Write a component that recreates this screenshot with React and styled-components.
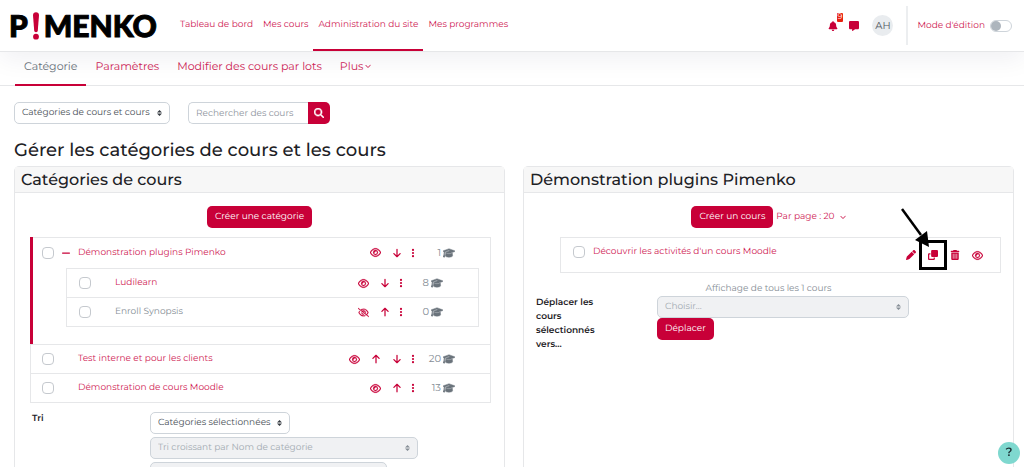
import React, { useState } from "react";
import styled, { createGlobalStyle, css, ThemeProvider } from "styled-components";
import {
  FaArrowDown,
  FaArrowUp,
  FaBell,
  FaChevronDown,
  FaClone,
  FaEllipsisVertical,
  FaGraduationCap,
  FaMagnifyingGlass,
  FaMessage,
  FaMinus,
  FaPen,
  FaRegEye,
  FaRegEyeSlash,
  FaTrashCan,
} from "react-icons/fa6";

const theme = {
  brand: "#c80038",
  link: "#cf2355",
  textColor: "#1d2125",
  muted: "#868e96",
  border: "#e6e7e9",
  inputBorder: "#ced4da",
  disabled: "#f0f1f3",
};

const GlobalStyle = createGlobalStyle`
  * {
    box-sizing: border-box;
  }
  body {
    margin: 0;
    background: #fff;
    color: ${theme.textColor};
    font-family: Montserrat, Inter, sans-serif;
    font-size: 9px;
    line-height: 14px;
    text-rendering: geometricPrecision;
  }
  button, input, select {
    font: inherit;
    margin: 0;
    text-rendering: inherit;
  }
  a {
    color: ${theme.link};
    text-decoration: none;
  }
  svg {
    display: block;
    flex: none;
  }
`;

const Page = styled.div`
  height: 100vh;
  overflow: hidden;
`;

/* top bar */
const Navbar = styled.header`
  position: relative;
  display: flex;
  align-items: stretch;
  height: 52px;
  padding: 0 12px 0 9px;
  background: #fff;
  border-bottom: 1px solid ${(props) => props.theme.border};
  box-shadow: 0 8px 24px rgba(20, 20, 60, 0.06);
`;

const Logo = styled.a`
  display: flex;
  align-items: center;
  gap: 4px;
  width: 166px;
  color: #000;
  font-family: Lato, sans-serif;
  font-weight: 900;
  font-size: 30px;
  line-height: 30px;
  -webkit-text-stroke: 1px #000;
`;

const PrimaryNav = styled.nav`
  display: flex;
  flex: 1;
`;

const PrimaryLink = styled.a`
  display: flex;
  align-items: center;
  padding: 0 5px;
  border-bottom: 2px solid ${(props) => (props.$active ? props.theme.brand : "transparent")};
`;

const UserMenu = styled.div`
  display: flex;
  align-items: center;
`;

const IconButton = styled.button`
  position: relative;
  display: grid;
  place-items: center;
  width: ${(props) => props.$width || 21}px;
  height: 14px;
  padding: 0;
  border: 0;
  background: none;
  color: ${(props) => props.theme.brand};
  font-size: ${(props) => props.$size || 10}px;
`;

const Badge = styled.span`
  position: absolute;
  top: -6px;
  right: 0;
  padding: 0 1px;
  border-radius: 1px;
  background: #e7210f;
  color: #fff;
  font-size: 8px;
  line-height: 9px;
`;

const Avatar = styled.span`
  display: grid;
  place-items: center;
  width: 21px;
  height: 21px;
  margin: 0 13px 0 8px;
  border-radius: 50%;
  background: #e9ecef;
  color: #50575e;
  font-size: 10px;
`;

const EditMode = styled.label`
  display: flex;
  align-items: center;
  gap: 5px;
  height: 39px;
  padding-left: 9px;
  border-left: 2px solid #eceef0;
  color: ${(props) => props.theme.link};
`;

const Toggle = styled.input`
  appearance: none;
  display: flex;
  align-items: center;
  width: 22px;
  height: 12px;
  padding: 0;
  border: 1px solid ${(props) => props.theme.inputBorder};
  border-radius: 6px;

  &::before {
    content: "";
    width: 10px;
    height: 10px;
    border-radius: 50%;
    background: #adb5bd;
  }
  &:checked::before {
    margin-left: auto;
  }
`;

/* second level */
const SecondaryNav = styled.nav`
  display: flex;
  height: 34px;
  padding: 0 15px;
  border-bottom: 1px solid ${(props) => props.theme.border};
`;

const SecondaryLink = styled.a`
  display: flex;
  align-items: center;
  gap: 2px;
  height: 34px;
  padding: 0 9px 4px;
  border-bottom: 2px solid ${(props) => (props.$active ? props.theme.brand : "transparent")};
  color: ${(props) => (props.$active ? "#6a737b" : props.theme.link)};
  font-size: 11px;
`;

const Content = styled.main`
  padding: 16px 10px 0 14px;
`;

const Filters = styled.div`
  display: flex;
  gap: 18px;
`;

const control = css`
  height: 22px;
  border: 1px solid ${(props) => props.theme.inputBorder};
  border-radius: 5px;
  background: #fff;
  color: #495057;
`;

const SelectWrapper = styled.span`
  position: relative;
  display: block;
  width: ${(props) => props.$width}px;
  max-width: 100%;
`;

const StyledSelect = styled.select`
  ${control}
  appearance: none;
  display: block;
  width: 100%;
  padding: 0 14px 0 7px;

  &:disabled {
    background: ${(props) => props.theme.disabled};
    color: #a3abb2;
    opacity: 1;
  }
`;

const SelectArrows = styled.svg`
  position: absolute;
  top: 8px;
  right: 8px;
  width: 5px;
  height: 6px;
  fill: ${(props) => (props.$disabled ? "#868e96" : "#343a40")};
  pointer-events: none;
`;

const SearchForm = styled.form`
  display: flex;
`;

const SearchInput = styled.input`
  ${control}
  width: 120px;
  padding: 0 7px;
  border-radius: 5px 0 0 5px;
  border-right: 0;

  &::placeholder {
    color: #8f959e;
    opacity: 1;
  }
`;

const Button = styled.button`
  display: inline-flex;
  align-items: center;
  justify-content: center;
  height: 22px;
  padding: 0 8px;
  border: 0;
  border-radius: 5px;
  background: ${(props) => props.theme.brand};
  color: #fff;
`;

const SearchButton = styled(Button)`
  width: 22px;
  padding: 0;
  border-radius: 0 5px 5px 0;
  font-size: 10px;
`;

const PageHead = styled.h2`
  margin: 14px 0 4px;
  font-size: 18px;
  line-height: 24px;
  font-weight: 500;
`;

const Columns = styled.div`
  display: grid;
  grid-template-columns: 1fr 1fr;
  gap: 18px;
`;

const Card = styled.section`
  min-height: 340px;
  border: 1px solid ${(props) => props.theme.border};
  border-radius: 5px;
`;

const CardHead = styled.h3`
  margin: 0;
  padding: 2px 6px 0;
  height: 26px;
  border-bottom: 1px solid ${(props) => props.theme.border};
  background: #f7f7f7;
  font-size: 16px;
  line-height: 24px;
  font-weight: 500;
`;

const CardActions = styled.div`
  display: flex;
  align-items: center;
  justify-content: center;
  gap: 3px;
  padding: 13px 0 9px;
`;

const PerPage = styled.a`
  display: flex;
  align-items: center;
  gap: 5px;
`;

const List = styled.ul`
  list-style: none;
  margin: ${(props) => props.$margin};
  padding: 0;
  border: 1px solid ${(props) => props.theme.border};
`;

const ListItem = styled.li`
  & + & {
    border-top: 1px solid ${(props) => props.theme.border};
  }
  ${(props) =>
    props.$open &&
    css`
      margin: -1px 0 0 -1px;
      padding-bottom: 17px;
      border-left: 3px solid ${props.theme.brand};
    `}
`;

const Row = styled.div`
  display: flex;
  align-items: center;
  height: ${(props) => props.$height || 28}px;
  padding: 0 35px 0 ${(props) => props.$left || 12}px;
`;

const Check = styled.input`
  appearance: none;
  flex: none;
  width: 12px;
  height: 12px;
  border: 1px solid #c5c9ce;
  border-radius: 4px;

  &:checked {
    background: ${(props) => props.theme.brand};
  }
`;

const Expander = styled.span`
  display: grid;
  place-items: center;
  width: 24px;
  color: ${(props) => props.theme.brand};
  font-size: 10px;
`;

const RowName = styled.a`
  flex: 1;
  white-space: nowrap;
  color: ${(props) => (props.$dimmed ? props.theme.muted : props.theme.link)};
`;

const Count = styled.span`
  display: flex;
  align-items: center;
  justify-content: flex-end;
  gap: 2px;
  width: 36px;
  color: ${(props) => props.theme.muted};
  font-size: 10px;

  svg {
    color: #6a737b;
    font-size: 12px;
  }
`;

const CourseRow = styled(Row)`
  height: 34px;
  padding: 0 12px;
`;

const CourseName = styled(RowName)`
  padding: 0 0 6px 8px;
`;

const CourseCheck = styled(Check)`
  margin-bottom: 6px;
`;

const Highlight = styled.span`
  position: relative;
  display: grid;
  place-items: center;
  width: 22px;

  &::before {
    content: "";
    position: absolute;
    inset: -8px -3px;
    border: 3px solid #000;
  }
`;

const Pointer = styled.svg`
  position: absolute;
  right: 15px;
  bottom: 15px;
  width: 32px;
  height: 44px;
  pointer-events: none;
`;

const FormRow = styled.div`
  display: grid;
  grid-template-columns: ${(props) => props.$label}px 1fr;
  margin: ${(props) => props.$margin};
`;

const FormLabel = styled.label`
  max-width: 70px;
  font-weight: 600;
`;

const Fields = styled.div`
  display: flex;
  flex-direction: column;
  align-items: flex-start;
  gap: ${(props) => props.$gap || 0}px;
`;

const Summary = styled.p`
  margin: 9px 0 0;
  text-align: center;
  color: ${(props) => props.theme.muted};
`;

const Help = styled.button`
  position: fixed;
  right: 4px;
  bottom: 3px;
  width: 22px;
  height: 22px;
  padding: 0;
  border: 0;
  border-radius: 50%;
  background: #7fd8cf;
  color: #1d2f33;
  font-size: 12px;
  font-weight: 600;
`;

const Select = ({ id, label, width, options, disabled }) => (
  <SelectWrapper $width={width}>
    <StyledSelect id={id} aria-label={label} disabled={disabled}>
      {options.map((option) => (
        <option key={option}>{option}</option>
      ))}
    </StyledSelect>
    <SelectArrows viewBox="0 0 5 6" $disabled={disabled}>
      <path d="M2.5 0 5 2.5H0zM2.5 6 0 3.5h5z" />
    </SelectArrows>
  </SelectWrapper>
);

const actionIcons = {
  show: ["Masquer", FaRegEye],
  hidden: ["Afficher", FaRegEyeSlash],
  up: ["Monter", FaArrowUp],
  down: ["Descendre", FaArrowDown],
};

const categories = [
  {
    name: "Démonstration plugins Pimenko",
    actions: ["show", "down"],
    count: 1,
    children: [
      { name: "Ludilearn", actions: ["show", "down"], count: 8 },
      { name: "Enroll Synopsis", actions: ["hidden", "up"], count: 0, dimmed: true },
    ],
  },
  { name: "Test interne et pour les clients", actions: ["show", "up", "down"], count: 20 },
  { name: "Démonstration de cours Moodle", actions: ["show", "up"], count: 13 },
];

const CategoryRow = ({ category, height, left }) => (
  <Row $height={height} $left={left}>
    <Check type="checkbox" aria-label={category.name} />
    <Expander>{category.children && <FaMinus />}</Expander>
    <RowName href="#" $dimmed={category.dimmed}>
      {category.name}
    </RowName>
    {category.actions.map((action) => {
      const [label, Icon] = actionIcons[action];
      const isEye = action === "show" || action === "hidden";
      return (
        <IconButton key={action} type="button" aria-label={label} $size={isEye ? 11 : 10}>
          <Icon stroke="currentColor" strokeWidth={isEye ? 12 : 0} />
        </IconButton>
      );
    })}
    <IconButton type="button" aria-label="Actions" $width={12}>
      <FaEllipsisVertical />
    </IconButton>
    <Count>
      {category.count}
      <FaGraduationCap stroke="currentColor" strokeWidth="24" />
    </Count>
  </Row>
);

const App = () => {
  const [editing, setEditing] = useState(false);

  return (
    <ThemeProvider theme={theme}>
      <GlobalStyle />
      <Page>
        <Navbar>
          <Logo href="#" aria-label="Pimenko">
            P
            <svg width="8" height="28" viewBox="0 0 8 28" fill={theme.brand}>
              <path d="M1 3.2C1 1.3 2.2.3 4 .3s3 1 3 2.9L5.8 18.6c-.1 1.1-.8 1.7-1.8 1.7s-1.7-.6-1.8-1.7z" />
              <circle cx="4" cy="24.7" r="2.9" />
            </svg>
            MENKO
          </Logo>
          <PrimaryNav>
            <PrimaryLink href="#">Tableau de bord</PrimaryLink>
            <PrimaryLink href="#">Mes cours</PrimaryLink>
            <PrimaryLink href="#" $active>
              Administration du site
            </PrimaryLink>
            <PrimaryLink href="#">Mes programmes</PrimaryLink>
          </PrimaryNav>
          <UserMenu>
            <IconButton type="button" aria-label="Notifications">
              <FaBell />
              <Badge>9</Badge>
            </IconButton>
            <IconButton type="button" aria-label="Messages">
              <FaMessage />
            </IconButton>
            <Avatar>AH</Avatar>
            <EditMode>
              Mode d'édition
              <Toggle
                type="checkbox"
                checked={editing}
                onChange={(e) => setEditing(e.target.checked)}
              />
            </EditMode>
          </UserMenu>
        </Navbar>

        <SecondaryNav>
          <SecondaryLink href="#" $active>
            Catégorie
          </SecondaryLink>
          <SecondaryLink href="#">Paramètres</SecondaryLink>
          <SecondaryLink href="#">Modifier des cours par lots</SecondaryLink>
          <SecondaryLink href="#">
            Plus
            <FaChevronDown size={6} />
          </SecondaryLink>
        </SecondaryNav>

        <Content>
          <Filters>
            <Select label="Affichage" width={156} options={["Catégories de cours et cours"]} />
            <SearchForm>
              <SearchInput placeholder="Rechercher des cours" aria-label="Rechercher des cours" />
              <SearchButton type="button" aria-label="Rechercher">
                <FaMagnifyingGlass stroke="currentColor" strokeWidth="24" />
              </SearchButton>
            </SearchForm>
          </Filters>

          <PageHead>Gérer les catégories de cours et les cours</PageHead>

          <Columns>
            <Card>
              <CardHead>Catégories de cours</CardHead>
              <CardActions>
                <Button type="button">Créer une catégorie</Button>
              </CardActions>
              <List $margin="0 13px 0 15px">
                {categories.map((category) => (
                  <ListItem key={category.name} $open={!!category.children}>
                    <CategoryRow
                      category={category}
                      height={category.children ? 31 : 28}
                      left={category.children ? 9 : 11}
                    />
                    {category.children && (
                      <List $margin="0 11px 0 33px">
                        {category.children.map((child) => (
                          <ListItem key={child.name}>
                            <CategoryRow category={child} />
                          </ListItem>
                        ))}
                      </List>
                    )}
                  </ListItem>
                ))}
              </List>
              <FormRow $label={118} $margin="9px 13px 0 17px">
                <FormLabel htmlFor="sort-scope">Tri</FormLabel>
                <Fields $gap={3}>
                  <Select id="sort-scope" width={140} options={["Catégories sélectionnées"]} />
                  <Select
                    label="Tri des catégories"
                    width={268}
                    options={["Tri croissant par Nom de catégorie"]}
                    disabled
                  />
                  <Select
                    label="Tri des cours"
                    width={237}
                    options={["Tri croissant par Nom de cours"]}
                    disabled
                  />
                </Fields>
              </FormRow>
            </Card>

            <Card>
              <CardHead>Démonstration plugins Pimenko</CardHead>
              <CardActions>
                <Button type="button">Créer un cours</Button>
                <PerPage href="#">
                  Par page : 20
                  <FaChevronDown size={6} />
                </PerPage>
              </CardActions>
              <List $margin="0 12px 0 36px">
                <ListItem>
                  <CourseRow>
                    <CourseCheck type="checkbox" aria-label="Découvrir les activités d'un cours Moodle" />
                    <CourseName href="#">Découvrir les activités d'un cours Moodle</CourseName>
                    <IconButton type="button" aria-label="Modifier" $width={22}>
                      <FaPen />
                    </IconButton>
                    <Highlight>
                      <IconButton type="button" aria-label="Copier" $width={22}>
                        <FaClone />
                      </IconButton>
                      <Pointer viewBox="0 0 32 44">
                        <path d="M5 6 24 32" stroke="#000" strokeWidth="2.5" fill="none" />
                        <path d="M32 44 18 37 30 28z" />
                      </Pointer>
                    </Highlight>
                    <IconButton type="button" aria-label="Supprimer" $width={22}>
                      <FaTrashCan />
                    </IconButton>
                    <IconButton type="button" aria-label="Masquer" $width={22} $size={11}>
                      <FaRegEye stroke="currentColor" strokeWidth="12" />
                    </IconButton>
                  </CourseRow>
                </ListItem>
              </List>
              <Summary>Affichage de tous les 1 cours</Summary>
              <FormRow $label={121} $margin="0 13px 0 12px">
                <FormLabel htmlFor="move-to">Déplacer les cours sélectionnés vers...</FormLabel>
                <Fields>
                  <Select id="move-to" width={252} options={["Choisir..."]} disabled />
                  <Button type="button">Déplacer</Button>
                </Fields>
              </FormRow>
            </Card>
          </Columns>
        </Content>
        <Help type="button" aria-label="Aide">?</Help>
      </Page>
    </ThemeProvider>
  );
};

export default App;
